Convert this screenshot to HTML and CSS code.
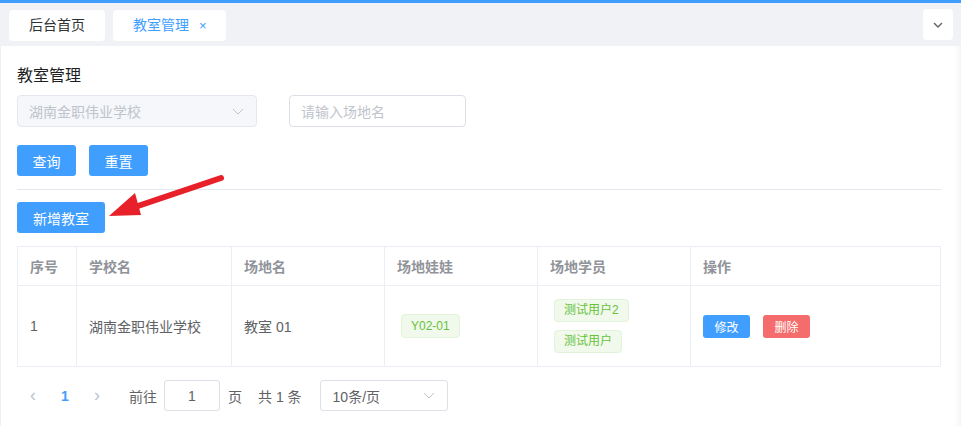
FILE: index.html
```html
<!DOCTYPE html>
<html lang="zh-CN">
<head>
  <meta charset="UTF-8" />
  <title>教室管理</title>
  <link rel="stylesheet" href="styles.css">
</head>
<body>
  <div class="top-line"></div>

  <div class="tags-view">
    <div class="tabs">
      <span class="tab">后台首页</span>
      <span class="tab active">教室管理 <span class="tab-close">×</span></span>
    </div>
    <div class="tabs-menu">
      <svg width="10" height="6" viewBox="0 0 10 6"><polyline points="1,1 5,5 9,1" fill="none" stroke="#606266" stroke-width="1.4"/></svg>
    </div>
  </div>

  <div class="page">
    <h2 class="page-title">教室管理</h2>

    <div class="filters">
      <div class="select disabled">
        <span>湖南金职伟业学校</span>
        <svg class="chev" width="12" height="7" viewBox="0 0 12 7"><polyline points="1,1 6,6 11,1" fill="none" stroke="#c0c4cc" stroke-width="1"/></svg>
      </div>
      <div class="input"><span class="placeholder">请输入场地名</span></div>
    </div>

    <div class="actions">
      <button class="btn">查询</button>
      <button class="btn">重置</button>
    </div>

    <div class="divider"></div>

    <button class="btn">新增教室</button>

    <table class="data-table">
      <colgroup>
        <col style="width: 59px">
        <col style="width: 155px">
        <col style="width: 153px">
        <col style="width: 153px">
        <col style="width: 153px">
        <col>
      </colgroup>
      <thead>
        <tr>
          <th>序号</th>
          <th>学校名</th>
          <th>场地名</th>
          <th>场地娃娃</th>
          <th>场地学员</th>
          <th>操作</th>
        </tr>
      </thead>
      <tbody>
        <tr>
          <td>1</td>
          <td>湖南金职伟业学校</td>
          <td>教室 01</td>
          <td><span class="tag">Y02-01</span></td>
          <td>
            <div class="tag-list">
              <span class="tag">测试用户2</span>
              <span class="tag">测试用户</span>
            </div>
          </td>
          <td>
            <button class="btn mini">修改</button>
            <button class="btn mini danger">删除</button>
          </td>
        </tr>
      </tbody>
    </table>

    <div class="pagination">
      <span class="pg-btn arrow">&lsaquo;</span>
      <span class="pg-btn current">1</span>
      <span class="pg-btn arrow">&rsaquo;</span>
      <span class="pg-text goto">前往</span>
      <div class="pg-input">1</div>
      <span class="pg-text">页</span>
      <span class="pg-text total">共 1 条</span>
      <div class="pg-size">
        <span>10条/页</span>
        <svg class="chev" width="12" height="7" viewBox="0 0 12 7"><polyline points="1,1 6,6 11,1" fill="none" stroke="#c0c4cc" stroke-width="1"/></svg>
      </div>
    </div>

    <!-- annotation arrow -->
    <svg class="annot-arrow" width="130" height="50" viewBox="0 0 130 50">
      <line x1="114" y1="6" x2="22" y2="37" stroke="#e8202a" stroke-width="6" stroke-linecap="round"/>
      <polygon points="2,44 28,21 34,43" fill="#e8202a"/>
    </svg>
  </div>
</body>
</html>
```

FILE: styles.css
```css
* {
  margin: 0;
  padding: 0;
  box-sizing: border-box;
}

body {
  font-family: 'Liberation Sans', 'Noto Sans CJK SC', sans-serif;
  background-color: #fff;
  color: #606266;
  font-size: 14px;
  width: 961px;
  height: 426px;
  overflow: hidden;
}

.top-line {
  height: 3px;
  background-color: #409eff;
}

.tags-view {
  height: 43px;
  background-color: #f0f2f5;
  display: flex;
  justify-content: space-between;
  padding: 7px 8px 0 9px;
}

.tabs {
  display: flex;
  gap: 8px;
}

.tab {
  height: 31px;
  line-height: 31px;
  padding: 0 20px;
  background-color: #fff;
  border-radius: 4px;
  color: #303133;
  font-size: 14px;
}

.tab.active {
  color: #409eff;
}

.tab-close {
  font-size: 13px;
  margin-left: 6px;
}

.tabs-menu {
  width: 30px;
  height: 31px;
  margin-top: -1px;
  background-color: #fff;
  border-radius: 4px;
  display: flex;
  align-items: center;
  justify-content: center;
}

.page {
  position: relative;
  height: 380px;
  padding: 20px 20px 0 16px;
  border-left: 1px solid #eef0f3;
  box-shadow: inset -7px 0 6px -5px rgba(0, 0, 0, 0.06);
}

.page-title {
  font-size: 16px;
  font-weight: normal;
  color: #1f1f1f;
  line-height: 20px;
}

.filters {
  display: flex;
  gap: 32px;
  margin-top: 9px;
}

.select,
.input {
  height: 32px;
  border: 1px solid #dcdfe6;
  border-radius: 4px;
  display: flex;
  align-items: center;
  justify-content: space-between;
  padding: 0 12px 0 11px;
  font-size: 14px;
}

.select {
  width: 240px;
  background-color: #f5f7fa;
  border-color: #e4e7ed;
  color: #c0c4cc;
}

.input {
  width: 177px;
  color: #c0c4cc;
}

.actions {
  display: flex;
  gap: 13px;
  margin-top: 18px;
}

.btn {
  font-family: inherit;
  height: 31px;
  padding: 0 16px;
  border: none;
  border-radius: 3px;
  background-color: #409eff;
  color: #fff;
  font-size: 14px;
}

.actions .btn {
  width: 59px;
  padding: 0;
}

.divider {
  height: 1px;
  background-color: #e4e7ed;
  margin: 13px 0 12px;
}

.data-table {
  margin-top: 13px;
  width: 924px;
  border-collapse: collapse;
  table-layout: fixed;
}

.data-table th,
.data-table td {
  border: 1px solid #ebeef5;
  text-align: left;
  padding: 0 12px;
  font-size: 14px;
}

.data-table th {
  height: 39px;
  color: #909399;
  font-weight: bold;
}

.data-table td {
  height: 81px;
  color: #606266;
}

.tag {
  display: inline-block;
  height: 24px;
  line-height: 22px;
  padding: 0 9px;
  background-color: #f0f9eb;
  border: 1px solid #e1f3d8;
  border-radius: 4px;
  color: #67c23a;
  font-size: 12px;
  margin-left: 4px;
}

.tag-list {
  display: flex;
  flex-direction: column;
  align-items: flex-start;
  gap: 8px;
}

.tag-list .tag {
  height: 23px;
  line-height: 21px;
}

.btn.mini {
  height: 23px;
  width: 47px;
  padding: 0;
  font-size: 12px;
}

.btn.mini + .btn.mini {
  margin-left: 9px;
}

.btn.danger {
  background-color: #f56c6c;
}

.pagination {
  display: flex;
  align-items: center;
  margin-top: 13px;
  height: 31px;
  font-size: 14px;
  color: #606266;
}

.pg-btn {
  width: 32px;
  text-align: center;
  font-size: 14px;
}

.pg-btn.arrow {
  color: #c0c4cc;
  font-size: 18px;
}

.pg-btn.current {
  color: #409eff;
  font-weight: bold;
}

.pg-text.goto {
  margin-left: 16px;
}

.pg-input {
  width: 56px;
  height: 31px;
  margin: 0 8px 0 7px;
  border: 1px solid #dcdfe6;
  border-radius: 3px;
  display: flex;
  align-items: center;
  justify-content: center;
}

.pg-text.total {
  margin-left: 16px;
}

.pg-size {
  width: 128px;
  height: 31px;
  margin-left: 18px;
  border: 1px solid #dcdfe6;
  border-radius: 3px;
  display: flex;
  align-items: center;
  justify-content: space-between;
  padding: 0 12px;
}

.annot-arrow {
  position: absolute;
  left: 106px;
  top: 126px;
}
```
